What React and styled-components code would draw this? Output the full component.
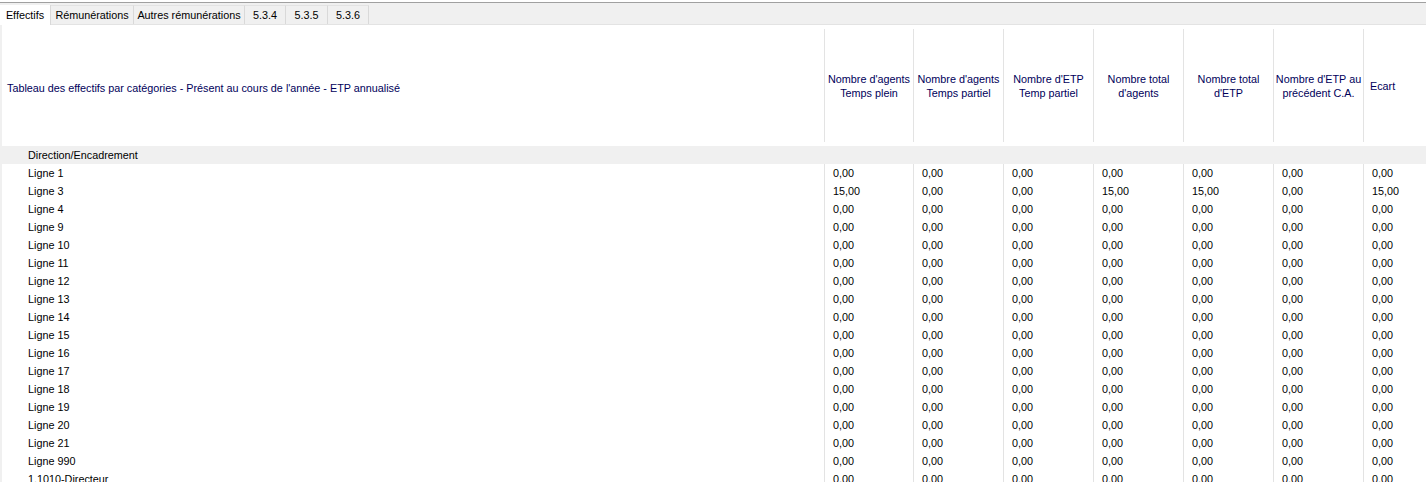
import React from 'react'
import styled, { createGlobalStyle } from 'styled-components'

const GlobalStyle = createGlobalStyle`
    body {
        margin: 0;
        background: #ffffff;
        font-family: "Liberation Sans", Arial, sans-serif;
        font-size: 10.8px;
        color: #000000;
        overflow: hidden;
    }
`;

const tabs = [
    { label: 'Effectifs', width: 51 },
    { label: 'Rémunérations', width: 83 },
    { label: 'Autres rémunérations', width: 111 },
    { label: '5.3.4', width: 41 },
    { label: '5.3.5', width: 42 },
    { label: '5.3.6', width: 41 },
];

const columns = [
    ["Nombre d'agents", 'Temps plein'],
    ["Nombre d'agents", 'Temps partiel'],
    ["Nombre d'ETP", 'Temp partiel'],
    ['Nombre total', "d'agents"],
    ['Nombre total', "d'ETP"],
    ["Nombre d'ETP au", 'précédent C.A.'],
    ['Ecart'],
];

const lines = [
    'Ligne 1', 'Ligne 3', 'Ligne 4', 'Ligne 9', 'Ligne 10', 'Ligne 11', 'Ligne 12',
    'Ligne 13', 'Ligne 14', 'Ligne 15', 'Ligne 16', 'Ligne 17', 'Ligne 18',
    'Ligne 19', 'Ligne 20', 'Ligne 21', 'Ligne 990', '1.1010-Directeur',
];

const GRID = '822px 89px repeat(5, 90px) 1fr';

function valuesFor(label) {
    if (label === 'Ligne 3') return ['15,00', '0,00', '0,00', '15,00', '15,00', '0,00', '15,00'];
    return Array(7).fill('0,00');
}

function App() {
    return (
        <Page>
            <GlobalStyle />
            <TabStrip>
                {tabs.map((t, i) => (
                    <Tab key={t.label} active={i === 0} w={t.width}>{t.label}</Tab>
                ))}
            </TabStrip>
            <Panel>
                <HeaderRow>
                    <Title>Tableau des effectifs par catégories - Présent au cours de l'année - ETP annualisé</Title>
                    {columns.map((c, i) => (
                        <HeadCell key={i} last={i === columns.length - 1}>
                            {c.map((l) => <span key={l}>{l}</span>)}
                        </HeadCell>
                    ))}
                </HeaderRow>
                <GroupRow>Direction/Encadrement</GroupRow>
                {lines.map((label) => (
                    <DataRow key={label}>
                        <Label>{label}</Label>
                        {valuesFor(label).map((v, i) => (
                            <Cell key={i}>{v}</Cell>
                        ))}
                    </DataRow>
                ))}
            </Panel>
        </Page>
    )
}

const Page = styled.div`
    width: 1426px;
    height: 482px;
    overflow: hidden;
    padding-top: 2px;
    box-sizing: border-box;
`;

const TabStrip = styled.div`
    display: flex;
    align-items: flex-end;
    height: 21px;
    background: #f0f0f0;
    border-top: 1px solid #a0a0a0;
    border-bottom: 1px solid #e3e3e3;
`;

const Tab = styled.div`
    width: ${p => p.w}px;
    height: ${p => p.active ? '20px' : '19px'};
    display: flex;
    align-items: center;
    justify-content: center;
    box-sizing: border-box;
    background: ${p => p.active ? '#ffffff' : '#f0f0f0'};
    border-right: 1px solid #d9d9d9;
    border-top: ${p => p.active ? 'none' : '1px solid #e3e3e3'};
    margin-bottom: ${p => p.active ? '-1px' : '0'};
    white-space: nowrap;
`;

const Panel = styled.div`
    border-left: 2px solid #f0f0f0;
`;

const HeaderRow = styled.div`
    display: grid;
    grid-template-columns: ${GRID};
    height: 121px;
`;

const Title = styled.div`
    display: flex;
    align-items: center;
    padding-left: 5px;
    padding-top: 4px;
    color: #00005a;
    white-space: nowrap;
`;

const HeadCell = styled.div`
    margin: 4px 0;
    border-left: 1px solid #e3e3e3;
    display: flex;
    flex-direction: column;
    justify-content: center;
    align-items: ${p => p.last ? 'flex-start' : 'center'};
    padding-left: ${p => p.last ? '6px' : '0'};
    line-height: 14px;
    color: #00005a;
    white-space: nowrap;
`;

const GroupRow = styled.div`
    height: 18px;
    display: flex;
    align-items: center;
    padding-left: 26px;
    background: #f0f0f0;
`;

const DataRow = styled.div`
    display: grid;
    grid-template-columns: ${GRID};
    height: 18px;
`;

const Label = styled.div`
    display: flex;
    align-items: center;
    padding-left: 26px;
`;

const Cell = styled.div`
    display: flex;
    align-items: center;
    padding-left: 8px;
    border-left: 1px solid #e3e3e3;
`;

export default App
